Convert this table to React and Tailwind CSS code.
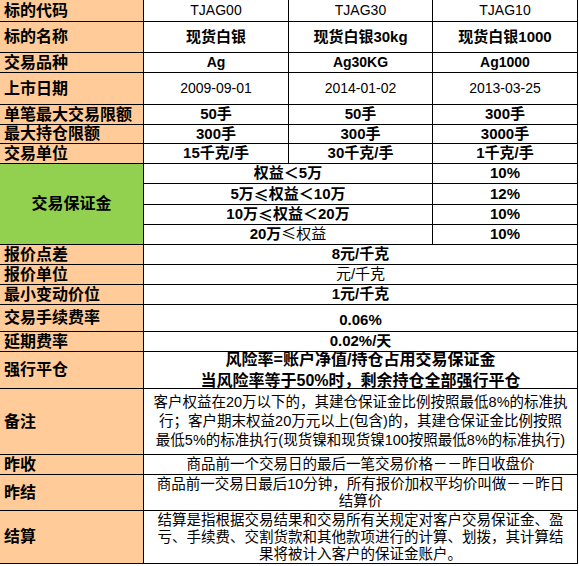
import { twMerge } from "tailwind-merge";

const FONT = "font-['Liberation_Sans','Noto_Sans_CJK_SC',sans-serif]";

function Label({ children, className }) {
  return (
    <div className={twMerge("flex items-center whitespace-nowrap bg-[#ffcc99] pl-1 text-[16px] font-bold leading-none text-black", className)}>
      {children}
    </div>
  );
}

function Cell({ children, className }) {
  return (
    <div className={twMerge("flex items-center justify-center whitespace-nowrap bg-white leading-none text-black", className)}>
      {children}
    </div>
  );
}

// full-width comparison sign, as in the sheet
const Le = () => <span className="font-['Noto_Sans_CJK_SC',sans-serif] leading-none">≤</span>;

const ROWS = [
  ["标的代码", ["TJAG00", "TJAG30", "TJAG10"], "text-[14px]"],
  ["标的名称", ["现货白银", "现货白银30kg", "现货白银1000"], "text-[15px] font-bold"],
  ["交易品种", ["Ag", "Ag30KG", "Ag1000"], "text-[14px] font-bold"],
  ["上市日期", ["2009-09-01", "2014-01-02", "2013-03-25"], "text-[14px]"],
  ["单笔最大交易限额", ["50手", "50手", "300手"], "text-[15px] font-bold"],
  ["最大持仓限额", ["300手", "300手", "3000手"], "text-[15px] font-bold"],
  ["交易单位", ["15千克/手", "30千克/手", "1千克/手"], "text-[15px] font-bold"],
];

const MARGIN = [
  [<>权益＜5万</>, "10%"],
  [<>5万<Le />权益＜10万</>, "12%"],
  [<>10万<Le />权益＜20万</>, "10%"],
  [<>20万<span className="font-normal"><Le />权益</span></>, "10%"],
];

export default function App() {
  return (
    <div className={twMerge("min-h-screen bg-white", FONT)}>
      <div className="grid w-fit grid-cols-[143px_144px_143px_144px] grid-rows-[21px_30px_19px_31px_19px_18px_19px_19px_20px_19px_19px_19px_19px_19px_26px_19px_36px_65px_19px_35px_52px] gap-px bg-black pr-px pb-px">
        {ROWS.map(([label, vals, cls]) => (
          <div key={label} className="contents">
            <Label>{label}</Label>
            {vals.map((v, i) => (
              <Cell key={i} className={cls}>{v}</Cell>
            ))}
          </div>
        ))}

        <div className="row-span-4 flex items-center justify-center bg-[#92d050] text-[16px] font-bold text-black">
          交易保证金
        </div>
        {MARGIN.map(([range, pct], i) => (
          <div key={i} className="contents">
            <Cell className="col-span-2 text-[15px] font-bold">{range}</Cell>
            <Cell className="text-[15px] font-bold">{pct}</Cell>
          </div>
        ))}

        <Label>报价点差</Label>
        <Cell className="col-span-3 text-[15px] font-bold">8元/千克</Cell>
        <Label>报价单位</Label>
        <Cell className="col-span-3 text-[15px]">元/千克</Cell>
        <Label>最小变动价位</Label>
        <Cell className="col-span-3 text-[15px] font-bold">1元/千克</Cell>
        <Label>交易手续费率</Label>
        <Cell className="col-span-3 pt-1 text-[15px] font-bold">0.06%</Cell>
        <Label>延期费率</Label>
        <Cell className="col-span-3 text-[15px] font-bold">0.02%/天</Cell>

        <Label>强行平仓</Label>
        <Cell className="col-span-3 flex-col text-[16px] leading-[21px] font-bold">
          <span>风险率=账户净值/持仓占用交易保证金</span>
          <span>当风险率等于50%时，剩余持仓全部强行平仓</span>
        </Cell>

        <Label>备注</Label>
        <Cell className="col-span-3 flex-col text-[14.5px] leading-[19px]">
          <span>客户权益在20万以下的，其建仓保证金比例按照最低8%的标准执</span>
          <span>行；客户期末权益20万元以上(包含)的，其建仓保证金比例按照</span>
          <span>最低5%的标准执行(现货镍和现货镍100按照最低8%的标准执行)</span>
        </Cell>

        <Label>昨收</Label>
        <Cell className="col-span-3 text-[14.5px]">商品前一个交易日的最后一笔交易价格－－昨日收盘价</Cell>

        <Label>昨结</Label>
        <Cell className="col-span-3 flex-col text-[14.5px] leading-[17px]">
          <span>商品前一交易日最后10分钟，所有报价加权平均价叫做－－昨日</span>
          <span>结算价</span>
        </Cell>

        <Label>结算</Label>
        <Cell className="col-span-3 flex-col text-[14.5px] leading-[17px]">
          <span>结算是指根据交易结果和交易所有关规定对客户交易保证金、盈</span>
          <span>亏、手续费、交割货款和其他款项进行的计算、划拨，其计算结</span>
          <span>果将被计入客户的保证金账户。</span>
        </Cell>
      </div>
    </div>
  );
}
